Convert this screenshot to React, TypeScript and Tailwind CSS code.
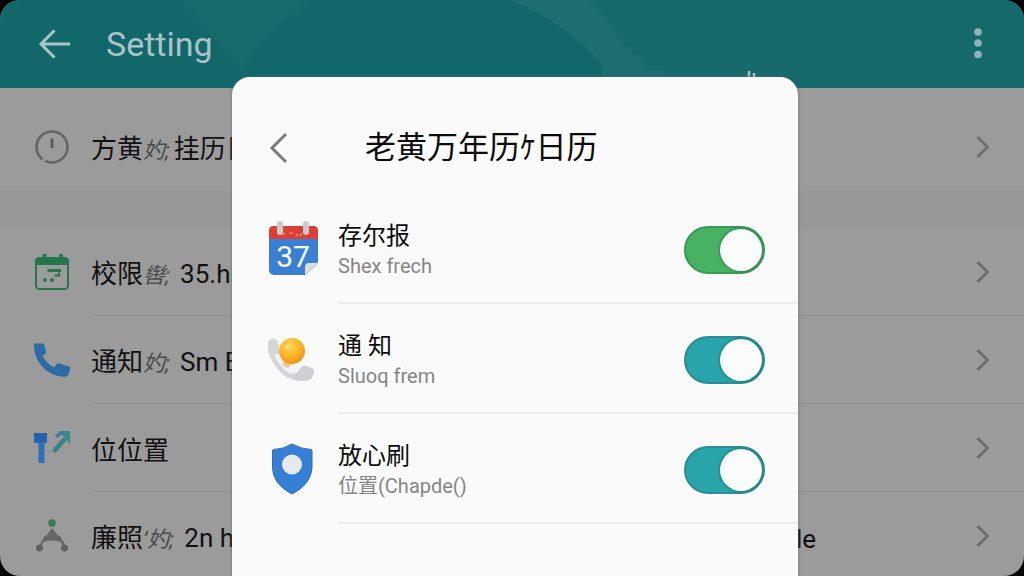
import { useId, useState } from 'react'
import type { ReactNode } from 'react'

interface RowProps {
  icon: ReactNode
  label: ReactNode
  value?: string
  className?: string
}

interface ToggleRowProps {
  icon: ReactNode
  title: string
  subtitle: string
  color: 'green' | 'teal'
}

const ClockIcon = () => (
  <svg className="size-9" viewBox="0 0 36 36" fill="none" aria-hidden="true">
    <circle cx="18" cy="18" r="15.5" stroke="#646464" strokeWidth="2.6" strokeDasharray="91 3 4 0" transform="rotate(138 18 18)" />
    <path d="M18 9.5V19" stroke="#5c5c5c" strokeWidth="3" />
    <path d="M19 18H26" stroke="#8c8c8c" strokeWidth="1" />
  </svg>
)

const GreenCalendarIcon = () => (
  <svg className="size-9" viewBox="0 0 36 36" fill="none" aria-hidden="true">
    <rect x="2" y="4" width="32" height="31" rx="3.5" stroke="#23774a" strokeWidth="2" />
    <path d="M1 11V7.5Q1 3.5 5 3.5H31Q35 3.5 35 7.5V11Z" fill="#23774a" />
    <path d="M10.5 0V6M27 0V6" stroke="#23774a" strokeWidth="3.5" />
    <path d="M13.5 16.5H27" stroke="#23774a" strokeWidth="3" />
    <path d="M20.500 21.500H25V18.500" stroke="#23774a" strokeWidth="2" />
    <circle cx="11" cy="26" r="2" fill="#23774a" />
    <circle cx="18" cy="26" r="2" fill="#23774a" />
  </svg>
)

const PhoneIcon = () => (
  <svg className="size-9" viewBox="0 0 36 36" aria-hidden="true">
    <path
      d="M0 1.5H9Q10 1.5 10.3 3L12 10Q12.3 11.5 11 12.3L8.5 14Q12 21 20 25.5L23 22Q24 21 25.5 21.4L35 24.5Q37 25 36 27.5L34.5 32Q33.5 35 30 34.8Q17 34 9 25.5Q-.5 15 0 1.5Z"
      fill="#2c6ba3"
    />
  </svg>
)

const RouteIcon = () => (
  <svg className="size-9" viewBox="0 0 36 36" fill="none" aria-hidden="true">
    <path d="M0 3H13V13H0Z" fill="#2464ad" />
    <path d="M7.5 12V33" stroke="#2e70b8" strokeWidth="6" />
    <path d="M19.5 22L31 8.5" stroke="#38818f" strokeWidth="4.5" />
    <path d="M25 1H36V14Z" fill="#38878d" />
    <path d="M22 6.5L28 2.5" stroke="#3a7f9c" strokeWidth="3.5" />
    <path d="M13 21H20" stroke="#7f8b92" strokeWidth="1" />
  </svg>
)

const NodesIcon = () => (
  <svg className="size-9" viewBox="0 0 36 36" aria-hidden="true">
    <path d="M18 10L31 26Q24 22 18 22.5Q11 22 6 26Z" fill="#666" />
    <path d="M12 18L5 30M25 18L31 30" stroke="#666" strokeWidth="2" />
    <circle cx="18" cy="5" r="3.8" fill="#357c54" />
    <circle cx="5.5" cy="30" r="3.5" fill="#606060" />
    <circle cx="30.5" cy="30" r="3.5" fill="#606060" />
  </svg>
)

const CalendarIcon = () => (
  <svg className="h-14 w-[50px]" viewBox="0 0 50 56" aria-hidden="true">
    <rect x="1" y="5" width="49" height="49" rx="5" fill="#3b7fd4" />
    <path d="M1 18V10Q1 5 6 5H45Q50 5 50 10V18Z" fill="#dc4034" />
    <path d="M15 14L17 12M21 12H25M28 13L30 15M32 15L34 12" stroke="#f0a08f" strokeWidth="1.2" fill="none" />
    <rect x="9" y="0" width="6" height="14" rx="3" fill="#c9cacc" />
    <rect x="35" y="0" width="6" height="14" rx="3" fill="#c9cacc" />
    <text x="25" y="46" textAnchor="middle" fontSize="30" fill="#f4f8fd" fontFamily="Roboto, sans-serif">
      37
    </text>
    <path d="M37 54V46Q37 42 41 42H50V54Z" fill="#dcdfe2" />
    <path d="M37 54L50 41V55H37Z" fill="#fafafa" />
    <path d="M37 54L50 42" stroke="#a9b3bd" strokeWidth="1" />
  </svg>
)

const CallIcon = () => (
  <svg className="h-12 w-[50px]" viewBox="0 0 50 48" aria-hidden="true">
    <defs>
      <radialGradient id="ball" cx=".4" cy=".3" r=".7">
        <stop offset="0" stopColor="#ffd55c" />
        <stop offset=".55" stopColor="#fdb62a" />
        <stop offset="1" stopColor="#ee9616" />
      </radialGradient>
    </defs>
    <path d="M5 3Q-2 5-1 14Q3 27 13 38Q22 46 33 46L30 35Q17 30 12 18L10 6Z" fill="#d5d6d9" />
    <path d="M6 20L14 18L20 30L32 30L30 37Q26 40 21 38Q11 31 6 20Z" fill="#f1f2f3" />
    <path d="M17 24L26 27L20 33L14 30Z" fill="#f2c292" />
    <path d="M29 38L34 31Q36 30 38 31L44 33Q47 34 46 38L44 43Q42 46 35 46Q27 46 23 41Z" fill="#ced0d3" />
    <circle cx="24" cy="16" r="13" fill="url(#ball)" />
    <circle cx="19.5" cy="11.5" r="1.5" fill="#ffe9a6" />
  </svg>
)

const ShieldIcon = () => (
  <svg className="h-13 w-[50px]" viewBox="0 0 50 52" aria-hidden="true">
    <path
      d="M24 1Q33 6 43 6.5Q44 6.5 44 8V25Q43 41 25 50.5Q24 51 23 50.5Q5 41 4.5 25V8Q4.5 6.5 6 6.5Q16 6 24 1Z"
      fill="#3580d6"
      stroke="#2b6dbd"
      strokeWidth="1"
    />
    <circle cx="24" cy="21.5" r="10" fill="#e6eaef" />
  </svg>
)

const ChevronRight = () => (
  <svg className="h-6 w-4 shrink-0" viewBox="0 0 16 24" fill="none" stroke="#6c6c6c" strokeWidth="2.6" aria-hidden="true">
    <path d="M1.500 2L11.500 12L1.500 22" />
  </svg>
)

// Fainter, slanted part in the middle of a row label
const Faint = ({ children }: { children: ReactNode }) => (
  <span className="mr-1 text-[22px] italic text-[#4c4c4c]">{children}</span>
)

const SettingRow = ({ icon, label, value, className = 'h-22' }: RowProps) => (
  <li className={`${className} flex items-stretch pl-[34px]`}>
    <span className="flex w-[57px] shrink-0 items-center">{icon}</span>
    <a href="#" className="flex min-w-0 flex-1 items-center border-b border-[#8f8f8f] pr-8">
      <span className="flex-1 whitespace-nowrap pt-1.5 text-[26px] leading-8 text-[#111]">{label}</span>
      {value && <span className="mr-40 pt-1.5 text-[26px] leading-8 text-[#111]">{value}</span>}
      <ChevronRight />
    </a>
  </li>
)

const ToggleRow = ({ icon, title, subtitle, color }: ToggleRowProps) => {
  const id = useId()
  const [on, setOn] = useState(true)
  const track = color === 'green' ? 'checked:bg-[#48b262] checked:border-[#3a9a57]' : 'checked:bg-[#2aa4ab] checked:border-[#2a8f93]'

  return (
    <li className="flex h-[110px] pl-9">
      <span className="flex w-[70px] shrink-0 items-center">{icon}</span>
      <div className="flex flex-1 items-center justify-between border-b-2 border-[#ececec] pr-[33px] pt-1">
        <label htmlFor={id} className="flex flex-col">
          <span className="text-2xl leading-8 text-[#0c0c0c]">{title}</span>
          <span className="text-xl leading-7 text-[#858585]">{subtitle}</span>
        </label>
        <span className="grid items-center">
          <input
            id={id}
            type="checkbox"
            role="switch"
            checked={on}
            onChange={(e) => setOn(e.target.checked)}
            className={`peer col-start-1 row-start-1 h-12 w-[81px] cursor-pointer appearance-none rounded-full border-2 border-gray-400 bg-gray-300 ${track}`}
          />
          <span className="pointer-events-none col-start-1 row-start-1 ml-1 size-[42px] rounded-full bg-[#fbfdfc] shadow-[0_0_2px_1px_rgba(0,70,60,0.4)] peer-checked:ml-9" />
        </span>
      </div>
    </li>
  )
}

export default function App() {
  return (
    <div className="h-screen bg-black font-[Roboto,'Noto_Sans_CJK_SC',sans-serif]">
      <div className="relative h-full overflow-hidden rounded-[20px] bg-[#9b9b9b]">
        <header className="relative flex h-22 items-center overflow-hidden bg-[#12676a] px-9">
          <svg className="absolute inset-0 size-full" viewBox="0 0 1024 88" preserveAspectRatio="none" aria-hidden="true">
            <path d="M180 0H312Q270 25 242 70Z" fill="#186b6d" />
            <path d="M510 0Q565 22 603 66L600 88H1024V0Z" fill="#166a6c" />
            <path d="M510 0H590L625 45L648 70H664V88H600L603 66Q565 22 510 0Z" fill="#1c6e70" />
            <path d="M749 71V78M754 73V78" stroke="#a7c3c4" strokeWidth="2.5" />
          </svg>
          <button type="button" aria-label="Back" className="relative">
            <svg className="h-8 w-9" viewBox="0 0 36 32" fill="none" stroke="#a9c4c7" strokeWidth="3" aria-hidden="true">
              <path d="M34 16H5M18.5 2.5L5 16L18.5 29.5" />
            </svg>
          </button>
          <h1 className="relative ml-[34px] flex-1 text-[34px] leading-10 text-[#a9c4c7]">Setting</h1>
          <button type="button" aria-label="More options" className="relative">
            <svg className="h-9 w-5" viewBox="0 0 20 36" fill="#8fb3b8" aria-hidden="true">
              <circle cx="10" cy="6" r="3.8" />
              <circle cx="10" cy="17" r="3.8" />
              <circle cx="10" cy="28.500" r="3.8" />
            </svg>
          </button>
        </header>

        <main>
          <ul>
            <SettingRow className="h-[102px] pt-4 *:border-b-0" icon={<ClockIcon />} label={<>方黄<Faint>妁;</Faint>挂历日</>} />
          </ul>
          <div className="h-[38px] bg-[#989898]" />
          <ul>
            <SettingRow icon={<GreenCalendarIcon />} label={<>校限<Faint>辔;</Faint> 35.h</>} />
            <SettingRow icon={<PhoneIcon />} label={<>通知<Faint>妁;</Faint> Sm E</>} />
            <SettingRow icon={<RouteIcon />} label="位位置" />
            <SettingRow icon={<NodesIcon />} label={<>廉照<Faint>’妁;</Faint> 2n h</>} value="le" />
          </ul>
        </main>

        <div className="absolute inset-0 flex justify-center pl-1.5 pt-[77px]">
          <section role="dialog" aria-labelledby="dialog-title" className="w-[566px] rounded-t-[18px] bg-[#fafafa] shadow-[0_0_2px_1px_rgba(90,110,110,0.5)]">
            <div className="flex h-[117px] items-center px-9 pt-6">
              <button type="button" aria-label="Close">
                <svg className="h-8 w-5" viewBox="0 0 20 32" fill="none" stroke="#7b7b7b" strokeWidth="3" aria-hidden="true">
                  <path d="M18 2L4 16L18 30" />
                </svg>
              </button>
              <h2 id="dialog-title" className="ml-[77px] whitespace-nowrap text-[31px] leading-10 text-[#0c0c0c]">
                老黄万年历ｹ日历
              </h2>
            </div>
            <ul>
              <ToggleRow icon={<CalendarIcon />} title="存尔报" subtitle="Shex frech" color="green" />
              <ToggleRow icon={<CallIcon />} title="通 知" subtitle="Sluoq frem" color="teal" />
              <ToggleRow icon={<ShieldIcon />} title="放心刷" subtitle="位置(Chapde()" color="teal" />
            </ul>
          </section>
        </div>
      </div>
    </div>
  )
}
